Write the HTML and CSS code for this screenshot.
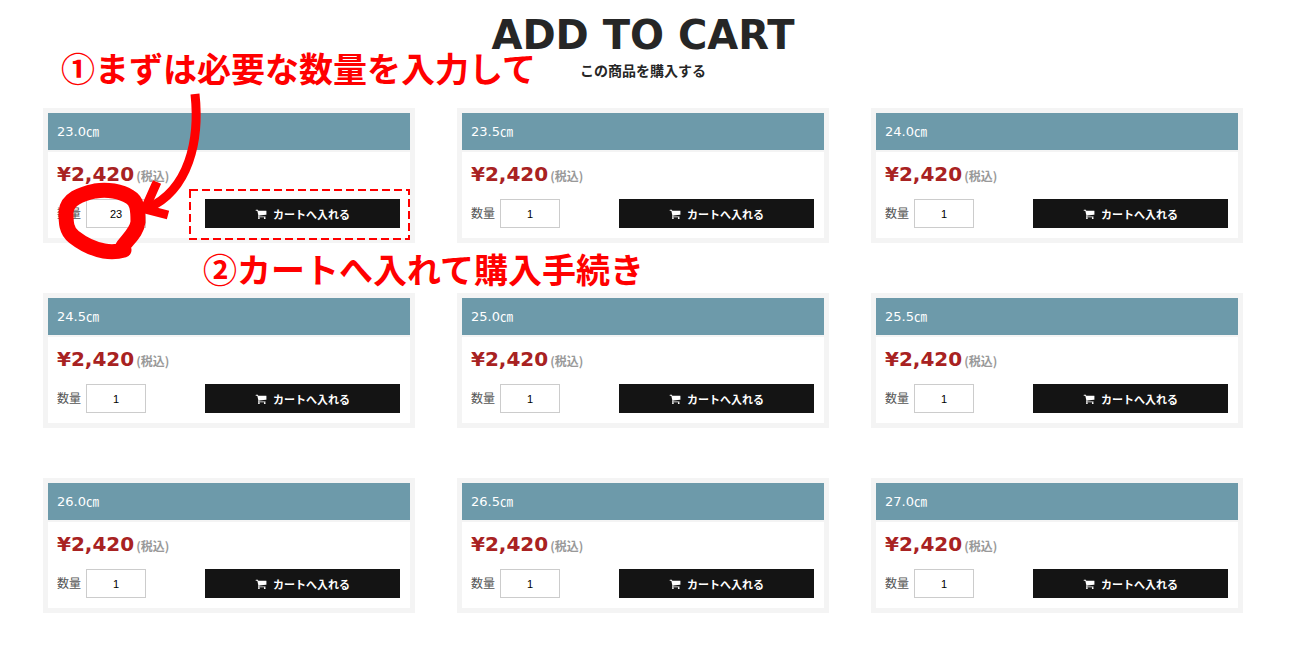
FILE: index.html
```
<!DOCTYPE html>
<html lang="ja">
<head>
  <meta charset="UTF-8">
  <title>ADD TO CART</title>
  <meta name="viewport" content="width=device-width, initial-scale=1.0">
  <link rel="stylesheet" href="styles.css">
</head>
<body>

<svg class="hidden" aria-hidden="true">
  <symbol id="icon-cart" viewBox="0 0 1664 1536">
    <path d="M640 1408a128 128 0 1 1-256 0a128 128 0 1 1 256 0zM1536 1408a128 128 0 1 1-256 0a128 128 0 1 1 256 0zM1664 320v512q0 24-16 42t-41 21L563 1017q13 60 13 70q0 16-24 64h920q26 0 45 19t19 45t-19 45t-45 19H448q-26 0-45-19t-19-45q0-11 8-31t16-36t21-40t15-30L267 256H64q-26 0-45-19T0 192t19-45t45-19h256q16 0 28 6t20 16t13 24t8 26t5 29t5 27h1201q26 0 45 19t19 45z"/>
  </symbol>
</svg>

<main class="container">
  <header class="heading">
    <h1>ADD TO CART</h1>
    <p>この商品を購入する</p>
  </header>

  <div class="products" id="product-list"></div>

  <!-- 購入手順の案内 -->
  <p class="guide guide-1">①まずは必要な数量を入力して</p>
  <p class="guide guide-2">②カートへ入れて購入手続き</p>
  <svg class="guide-marks" width="380" height="270" viewBox="0 0 380 270" aria-hidden="true">
    <rect class="mark-box" x="147" y="190" width="219" height="49"/>
    <path class="mark-circle" d="M23 212C24 199 38 194 52 191C64 189 78 191 87 197C94 201 95 209 95 222C94 231 87 237 80 246L81 250C74 252 67 252 61 251C50 249 40 244 31 237C23 231 23 222 23 212Z"/>
    <path class="mark-arrow" d="M152 94C157 140 146 190 105 208"/>
    <path class="mark-arrow" d="M114 182L102 209L125 215"/>
  </svg>
</main>

<script>
const products = [
  { id: 1, size: "23.0㎝", price: "2,420", count: 23 },
  { id: 2, size: "23.5㎝", price: "2,420", count: 1 },
  { id: 3, size: "24.0㎝", price: "2,420", count: 1 },
  { id: 4, size: "24.5㎝", price: "2,420", count: 1 },
  { id: 5, size: "25.0㎝", price: "2,420", count: 1 },
  { id: 6, size: "25.5㎝", price: "2,420", count: 1 },
  { id: 7, size: "26.0㎝", price: "2,420", count: 1 },
  { id: 8, size: "26.5㎝", price: "2,420", count: 1 },
  { id: 9, size: "27.0㎝", price: "2,420", count: 1 }
];

const container = document.getElementById("product-list");
products.forEach(p => {
  container.innerHTML += `
    <form class="product" onsubmit="return false">
      <h2 class="product-title">${p.size}</h2>
      <div class="details">
        <p class="product-price">¥${p.price}<span class="tax">(税込)</span></p>
        <div class="order">
          <label for="count-${p.id}">数量</label>
          <input type="text" inputmode="numeric" class="count" id="count-${p.id}" value="${p.count}">
          <button class="button"><svg class="icon" aria-hidden="true"><use href="#icon-cart"/></svg>カートへ入れる</button>
        </div>
      </div>
    </form>`;
});
</script>
</body>
</html>
```
FILE: styles.css
```
* { box-sizing: border-box; }
body {
  font-family: 'DejaVu Sans', 'Noto Sans CJK JP', sans-serif;
  background: #fff;
  color: #262626;
  margin: 0;
  padding-right: 19px;
}
h1, h2, p { margin: 0; }
.hidden { display: none; }
.container {
  position: relative;
  max-width: 1200px;
  margin: 0 auto;
  padding-bottom: 50px;
}
.heading {
  text-align: center;
  padding: 10px 0 27px;
}
.heading h1 {
  font-size: 40px;
  line-height: 50px;
  font-weight: bold;
}
.heading p {
  font-family: 'Noto Sans CJK JP', sans-serif;
  font-size: 14px;
  line-height: 21px;
  font-weight: bold;
}
.products {
  display: grid;
  grid-template-columns: repeat(3, 1fr);
  gap: 50px 42px;
}
.product {
  border: 5px solid #f4f4f4;
}
.product-title {
  height: 39px;
  background: #6d9aaa;
  border-bottom: 2px solid #f4f4f4;
  color: #fff;
  font-size: 13px;
  line-height: 37px;
  font-weight: normal;
  padding: 0 9px;
}
.details {
  padding: 10px 10px 10px 9px;
}
.product-price {
  height: 24px;
  color: #a82222;
  font-size: 20px;
  line-height: 24px;
  font-weight: bold;
  margin-bottom: 13px;
}
.tax {
  color: #999;
  font-family: 'Noto Sans CJK JP', sans-serif;
  font-size: 12px;
  line-height: 16px;
  margin-left: 2px;
}
.order {
  display: flex;
  align-items: center;
}
.order label {
  color: #555;
  font-size: 12px;
  line-height: 18px;
  margin-right: 5px;
}
.count {
  width: 60px;
  height: 29px;
  border: 1px solid #ccc;
  background: #fff;
  color: #000;
  font-family: 'Liberation Sans', sans-serif;
  font-size: 11px;
  text-align: center;
}
.button {
  display: flex;
  align-items: center;
  justify-content: center;
  gap: 6px;
  width: 195px;
  height: 29px;
  margin-left: auto;
  padding: 0;
  background: #141414;
  border: none;
  color: #fff;
  font-family: 'Noto Sans CJK JP', sans-serif;
  font-size: 11px;
  font-weight: bold;
  cursor: pointer;
}
.button:hover { background: #333; }
.icon {
  width: 12px;
  height: 10px;
  fill: #fff;
}
.guide {
  position: absolute;
  color: #f00;
  font-family: 'Noto Sans CJK JP', sans-serif;
  font-size: 34px;
  line-height: 40px;
  font-weight: bold;
  white-space: nowrap;
}
.guide-1 { top: 48px; left: 18px; }
.guide-2 { top: 249px; left: 160px; }
.guide-marks {
  position: absolute;
  top: 0;
  left: 0;
  fill: none;
  stroke: #f00;
  pointer-events: none;
}
.mark-box { stroke-width: 2; stroke-dasharray: 8 4; }
.mark-circle { stroke-width: 15; stroke-linejoin: round; }
.mark-arrow { stroke-width: 9; }
```
